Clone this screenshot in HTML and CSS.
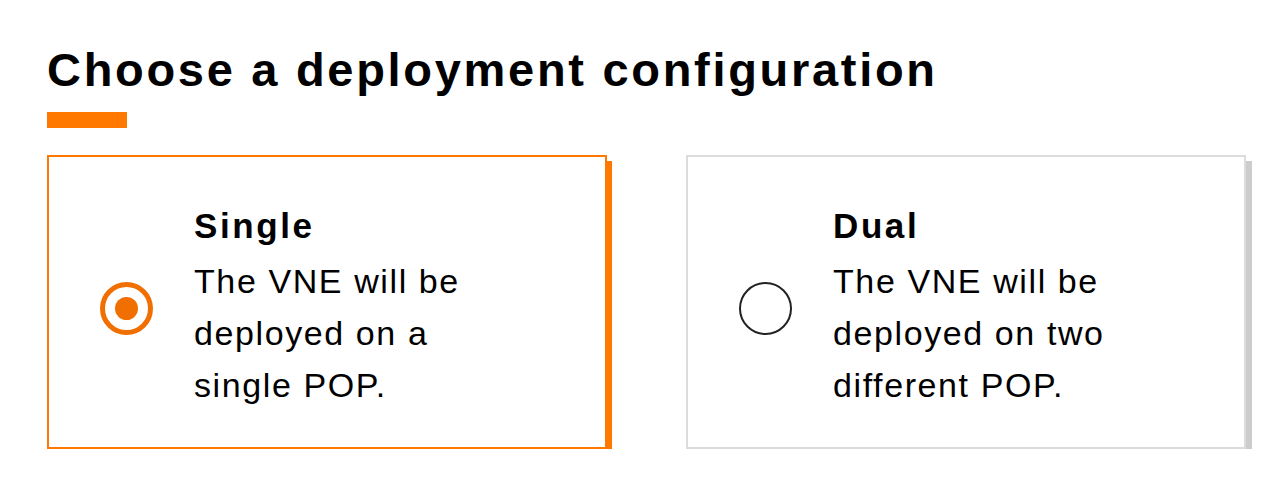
FILE: index.html
```html
<!DOCTYPE html>
<html lang="en">
<head>
    <meta charset="UTF-8">
    <meta name="viewport" content="width=device-width, initial-scale=1.0">
    <title>Deployment configuration</title>
    <link rel="stylesheet" href="styles.css">
</head>
<body>
    <div class="page">
        <h1 class="title">Choose a deployment configuration</h1>
        <div class="title-bar"></div>

        <div class="options">
            <label class="option selected">
                <input type="radio" name="deployment" value="single" checked>
                <span class="radio"></span>
                <span class="option-text">
                    <span class="option-name">Single</span>
                    <span class="option-desc">The VNE will be deployed on a single POP.</span>
                </span>
            </label>

            <label class="option">
                <input type="radio" name="deployment" value="dual">
                <span class="radio"></span>
                <span class="option-text">
                    <span class="option-name">Dual</span>
                    <span class="option-desc">The VNE will be deployed on two different POP.</span>
                </span>
            </label>
        </div>
    </div>
</body>
</html>
```

FILE: styles.css
```css
body {
    margin: 0;
    padding: 0;
    background-color: #fff;
    color: #000;
    font-family: "Liberation Sans", Arial, sans-serif;
}

.page {
    padding: 47px 0 0 47px;
}

.title {
    margin: 0;
    font-size: 47px;
    line-height: 46px;
    font-weight: bold;
    letter-spacing: 2.7px;
}

.title-bar {
    width: 80px;
    height: 16px;
    margin-top: 19px;
    background-color: #ff7900;
}

.options {
    display: grid;
    grid-template-columns: 560px 560px;
    column-gap: 79px;
    margin-top: 27px;
}

.option {
    display: flex;
    align-items: center;
    height: 294px;
    box-sizing: border-box;
    padding: 43px 20px 36px 51px;
    border: 2px solid #dcdcdc;
    box-shadow: 6px 6px 0 #cccccc;
    cursor: pointer;
}

.option.selected {
    border-color: #ff7900;
    box-shadow: 5px 6px 0 #ff7900;
}

.option input {
    display: none;
}

.radio {
    flex: none;
    width: 53px;
    height: 53px;
    margin-top: 5px;
    margin-right: 41px;
    box-sizing: border-box;
    border: 2px solid #222;
    border-radius: 50%;
    position: relative;
}

.option.selected .radio {
    border: 5px solid #f16e00;
}

.option.selected .radio::after {
    content: "";
    position: absolute;
    left: 10px;
    top: 10px;
    width: 23px;
    height: 23px;
    border-radius: 50%;
    background-color: #f16e00;
}

.option-text {
    display: flex;
    flex-direction: column;
    width: 300px;
}

.option-name {
    font-size: 35px;
    line-height: 52px;
    font-weight: bold;
    letter-spacing: 2.6px;
    margin-bottom: 3px;
}

.option-desc {
    font-size: 34px;
    line-height: 52px;
    letter-spacing: 1.6px;
}
```
